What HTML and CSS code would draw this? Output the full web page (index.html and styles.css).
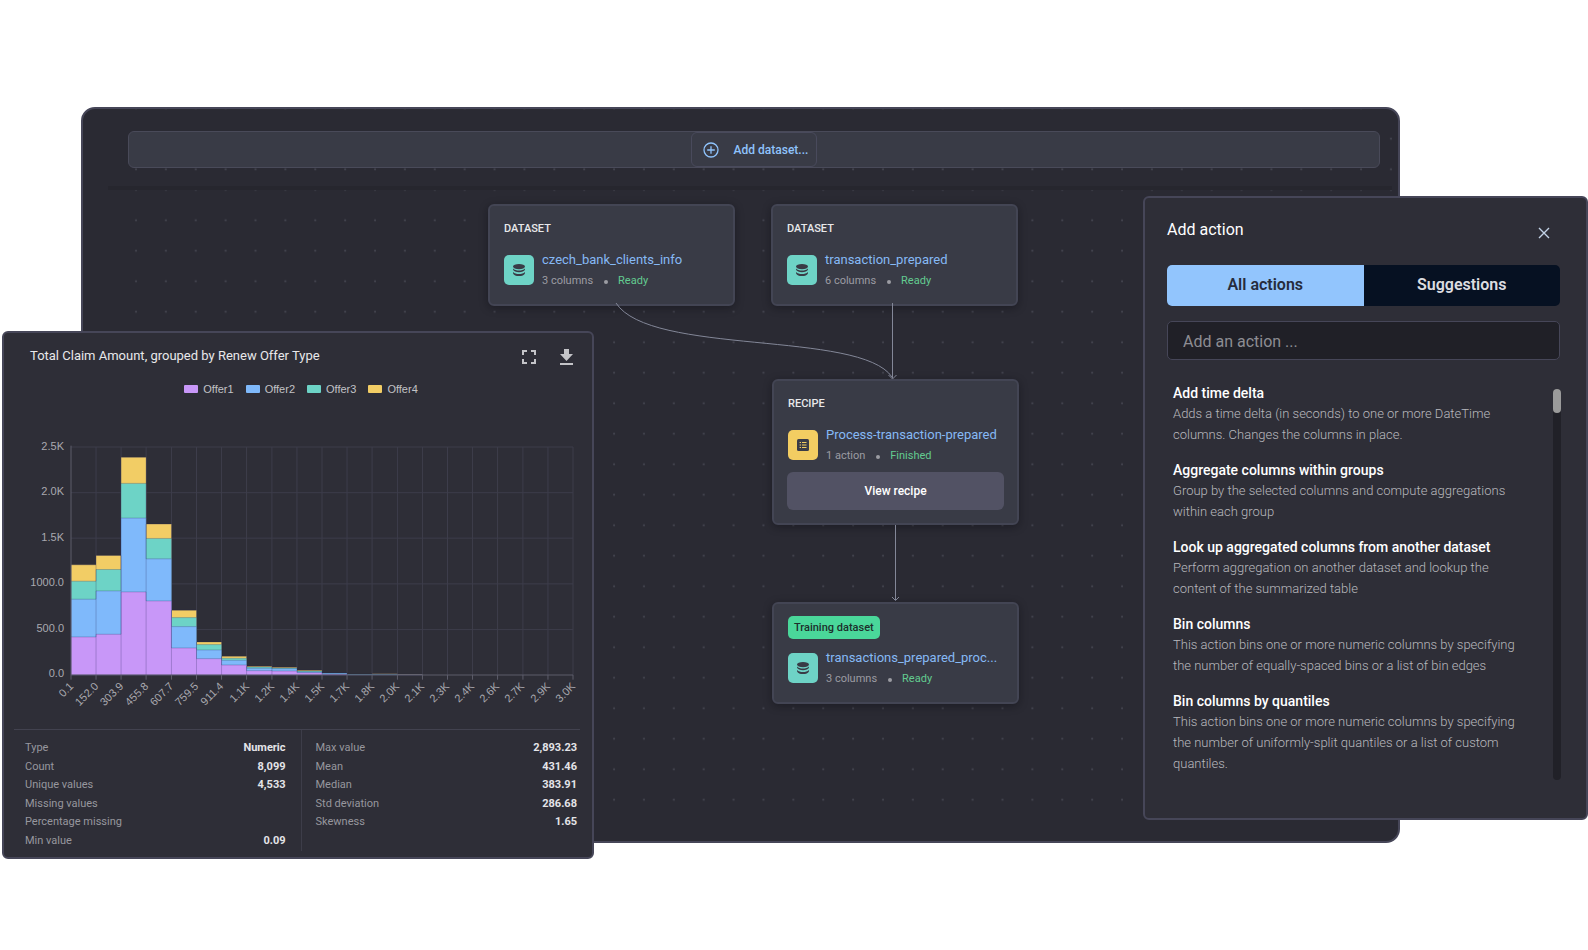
FILE: index.html
```html
<!DOCTYPE html>
<html lang="en">
<head>
<meta charset="utf-8">
<title>Recipe flow</title>
<link rel="stylesheet" href="styles.css">
</head>
<body>
<svg class="defs" aria-hidden="true">
  <defs>
    <symbol id="database" viewBox="0 0 12 12">
      <ellipse cx="6" cy="2.6" rx="6" ry="2.6"/>
      <path d="M0 4.4C1.4 6 3.6 6.4 6 6.4S10.600 6 12 4.400V5.600C11.400 7.500 8.700 8.200 6 8.200S.6 7.500 0 5.600Z"/>
      <path d="M0 8C1.400 9.600 3.600 10 6 10S10.600 9.600 12 8V9.200C11.400 11.200 8.700 12 6 12S.6 11.200 0 9.200Z"/>
    </symbol>
    <pattern id="dots" x="38" y="15" width="29.88" height="30.5" patternUnits="userSpaceOnUse">
      <circle cx="15" cy="15.250" r="1" fill="#474853"/>
    </pattern>
    <pattern id="dots-head" x="38" y="45" width="29.88" height="30.5" patternUnits="userSpaceOnUse">
      <circle cx="15" cy="15.250" r="1" fill="#474853"/>
    </pattern>
  </defs>
</svg>

<div class="stage">
  <main class="board">
    <header class="board-head">
      <svg class="backdrop" aria-hidden="true"><rect x="40" width="1275" height="76" fill="url(#dots-head)"/></svg>
      <div class="toolbar">
        <button class="add-dataset" type="button">
          <svg width="16" height="16" viewBox="0 0 16 16" fill="none" stroke="currentColor" stroke-width="1.300" aria-hidden="true"><circle cx="8" cy="8" r="7"/><path d="M8 4.200V11.800M4.200 8H11.800"/></svg>
          <span>Add dataset...</span>
        </button>
      </div>
    </header>
    <section class="canvas">
      <svg class="backdrop" aria-hidden="true"><rect x="40" width="1275" height="618" fill="url(#dots)"/></svg>

      <article class="node node-clients">
        <h2 class="node-kind">DATASET</h2>
        <div class="node-row">
          <span class="tile tile-data"><svg width="12" height="12"><use href="#database"/></svg></span>
          <div class="node-text">
            <a class="node-name" href="#clients">czech_bank_clients_info</a>
            <p class="node-meta">3 columns<i class="sep"></i><span class="ok">Ready</span></p>
          </div>
        </div>
      </article>

      <article class="node node-transactions">
        <h2 class="node-kind">DATASET</h2>
        <div class="node-row">
          <span class="tile tile-data"><svg width="12" height="12"><use href="#database"/></svg></span>
          <div class="node-text">
            <a class="node-name" href="#transactions">transaction_prepared</a>
            <p class="node-meta">6 columns<i class="sep"></i><span class="ok">Ready</span></p>
          </div>
        </div>
      </article>

      <article class="node node-recipe">
        <h2 class="node-kind">RECIPE</h2>
        <div class="node-row">
          <span class="tile tile-recipe">
            <svg width="12" height="12" viewBox="0 0 12 12"><rect width="12" height="12" rx="1.500" fill="#3a3b47"/><path d="M2.600 3.500H4M2.600 6H4M2.600 8.500H4M5 3.500H9.500M5 6H9.500M5 8.500H9.500" stroke="#f3cd62" stroke-width="1.100"/></svg>
          </span>
          <div class="node-text">
            <a class="node-name" href="#recipe">Process-transaction-prepared</a>
            <p class="node-meta">1 action<i class="sep"></i><span class="ok">Finished</span></p>
          </div>
        </div>
        <button class="view-recipe" type="button">View recipe</button>
      </article>

      <article class="node node-training">
        <span class="badge">Training dataset</span>
        <div class="node-row">
          <span class="tile tile-data"><svg width="12" height="12"><use href="#database"/></svg></span>
          <div class="node-text">
            <a class="node-name" href="#processed">transactions_prepared_proc...</a>
            <p class="node-meta">3 columns<i class="sep"></i><span class="ok">Ready</span></p>
          </div>
        </div>
      </article>

      <svg class="edges" fill="none" stroke="#838798" aria-hidden="true">
        <path d="M533 113C567 166 777 140 809 187"/>
        <path d="M809.500 113V188M805.500 185L809.500 189L813.500 185"/>
        <path d="M812.500 335V410M809 407L812.500 410.500L816 407"/>
      </svg>
    </section>
  </main>

  <section class="panel chart-panel">
    <div class="chart-head">
      <h2 class="chart-title">Total Claim Amount, grouped by Renew Offer Type</h2>
      <div class="chart-tools">
        <button class="icon-button" type="button" aria-label="Full screen">
          <svg width="14" height="14" viewBox="0 0 14 14" fill="none" stroke="currentColor" stroke-width="2"><path d="M1 5V1H5M9 1H13V5M13 9V13H9M5 13H1V9"/></svg>
        </button>
        <button class="icon-button" type="button" aria-label="Download">
          <svg width="14" height="16" viewBox="0 0 14 16" fill="currentColor"><path d="M4 0H9V5H13L6.500 12L0 5H4ZM0 14H13V16H0Z"/></svg>
        </button>
      </div>
    </div>
    <ul class="legend">
      <li><i class="swatch s1"></i>Offer1</li>
      <li><i class="swatch s2"></i>Offer2</li>
      <li><i class="swatch s3"></i>Offer3</li>
      <li><i class="swatch s4"></i>Offer4</li>
    </ul>
    <svg class="chart" viewBox="0 0 588 280" role="img" aria-label="Stacked histogram of total claim amount">
      <svg x="67" y="14" width="502" height="228" viewBox="0 0 1504 683" preserveAspectRatio="none" overflow="visible">
        <path class="grid" d="M0 0H1504M0 137H1504M0 273H1504M0 410H1504M0 547H1504M75 0V683M150 0V683M225 0V683M301 0V683M376 0V683M451 0V683M526 0V683M602 0V683M677 0V683M752 0V683M827 0V683M902 0V683M978 0V683M1053 0V683M1128 0V683M1203 0V683M1278 0V683M1354 0V683M1429 0V683M1504 0V683"/>
        <path class="f4" d="M0 683V353H75V325H150V31H225V231H301V489H376V584H451V627H526V657H602V660H677V669H752V677H827V681H902V679H978V681H1053V683Z"/>
        <path class="f3" d="M0 683V402H75V367H150V109H225V274H301V511H376V592H451V633H526V659H602V662H677V671H752V677H827V681H978V683Z"/>
        <path class="f2" d="M0 683V456H75V431H150V213H225V335H301V538H376V608H451V639H526V663H602V664H677V674H752V678H827V682H1053V683Z"/>
        <path class="f1" d="M0 683V569H75V561H150V434H225V461H301V602H376V634H451V653H526V670H602V671H677V676H752V681H827V683Z"/>
        <path class="seam" d="M75 353V683M150 325V683M225 231V683M301 489V683M376 584V683M451 627V683M526 657V683M602 660V683"/>
        <path class="axis" d="M0 -4V683M0 683H1504M0 683V697M75 683V697M150 683V697M225 683V697M301 683V697M376 683V697M451 683V697M526 683V697M602 683V697M677 683V697M752 683V697M827 683V697M902 683V697M978 683V697M1053 683V697M1128 683V697M1203 683V697M1278 683V697M1354 683V697M1429 683V697M1504 683V697"/>
      </svg>
      <g class="tick" text-anchor="end">
        <text x="60" y="17">2.5K</text>
        <text x="60" y="62">2.0K</text>
        <text x="60" y="108">1.5K</text>
        <text x="60" y="153">1000.0</text>
        <text x="60" y="199">500.0</text>
        <text x="60" y="244">0.0</text>
        <text transform="translate(70 254) rotate(-45)">0.1</text>
        <text transform="translate(95 254) rotate(-45)">152.0</text>
        <text transform="translate(120 254) rotate(-45)">303.9</text>
        <text transform="translate(145 254) rotate(-45)">455.8</text>
        <text transform="translate(170 254) rotate(-45)">607.7</text>
        <text transform="translate(195 254) rotate(-45)">759.5</text>
        <text transform="translate(220 254) rotate(-45)">911.4</text>
        <text transform="translate(246 254) rotate(-45)">1.1K</text>
        <text transform="translate(271 254) rotate(-45)">1.2K</text>
        <text transform="translate(296 254) rotate(-45)">1.4K</text>
        <text transform="translate(321 254) rotate(-45)">1.5K</text>
        <text transform="translate(346 254) rotate(-45)">1.7K</text>
        <text transform="translate(371 254) rotate(-45)">1.8K</text>
        <text transform="translate(396 254) rotate(-45)">2.0K</text>
        <text transform="translate(421 254) rotate(-45)">2.1K</text>
        <text transform="translate(446 254) rotate(-45)">2.3K</text>
        <text transform="translate(471 254) rotate(-45)">2.4K</text>
        <text transform="translate(496 254) rotate(-45)">2.6K</text>
        <text transform="translate(521 254) rotate(-45)">2.7K</text>
        <text transform="translate(547 254) rotate(-45)">2.9K</text>
        <text transform="translate(572 254) rotate(-45)">3.0K</text>
      </g>
    </svg>
    <div class="stats">
      <div class="stats-col">
        <table class="stats-table">
          <tr><th scope="row">Type</th><td>Numeric</td></tr>
          <tr><th scope="row">Count</th><td>8,099</td></tr>
          <tr><th scope="row">Unique values</th><td>4,533</td></tr>
          <tr><th scope="row">Missing values</th><td></td></tr>
          <tr><th scope="row">Percentage missing</th><td></td></tr>
          <tr><th scope="row">Min value</th><td>0.09</td></tr>
        </table>
      </div>
      <div class="stats-col">
        <table class="stats-table">
          <tr><th scope="row">Max value</th><td>2,893.23</td></tr>
          <tr><th scope="row">Mean</th><td>431.46</td></tr>
          <tr><th scope="row">Median</th><td>383.91</td></tr>
          <tr><th scope="row">Std deviation</th><td>286.68</td></tr>
          <tr><th scope="row">Skewness</th><td>1.65</td></tr>
          <tr><td>&nbsp;</td><td></td></tr>
        </table>
      </div>
    </div>
  </section>

  <aside class="panel action-panel">
    <div class="action-head">
      <h2 class="action-title">Add action</h2>
      <button class="icon-button close" type="button" aria-label="Close">
        <svg width="12" height="12" viewBox="0 0 12 12" fill="none" stroke="currentColor" stroke-width="1.400"><path d="M1 1L11 11M11 1L1 11"/></svg>
      </button>
    </div>
    <div class="tabs">
      <button class="tab tab-on" type="button">All actions</button>
      <button class="tab" type="button">Suggestions</button>
    </div>
    <input class="search" type="text" placeholder="Add an action ..." aria-label="Add an action">
    <div class="scroller">
      <ul class="actions">
        <li><h3>Add time delta</h3><p>Adds a time delta (in seconds) to one or more DateTime<br>columns. Changes the columns in place.</p></li>
        <li><h3>Aggregate columns within groups</h3><p>Group by the selected columns and compute aggregations<br>within each group</p></li>
        <li><h3>Look up aggregated columns from another dataset</h3><p>Perform aggregation on another dataset and lookup the<br>content of the summarized table</p></li>
        <li><h3>Bin columns</h3><p>This action bins one or more numeric columns by specifying<br>the number of equally-spaced bins or a list of bin edges</p></li>
        <li><h3>Bin columns by quantiles</h3><p>This action bins one or more numeric columns by specifying<br>the number of uniformly-split quantiles or a list of custom<br>quantiles.</p></li>
      </ul>
      <div class="track"><div class="thumb"></div></div>
    </div>
  </aside>
</div>
</body>
</html>
```
FILE: styles.css
```css
* { box-sizing: border-box; }

body {
  margin: 0;
  background: #fff;
  color: #e8e8ea;
  font-family: Roboto, "Liberation Sans", sans-serif;
  font-size: 14px;
}

h2, h3, p, ul { margin: 0; padding: 0; font-weight: 400; }
ul { list-style: none; }
button, input { margin: 0; font: inherit; color: inherit; }
button { cursor: pointer; }
svg { display: block; }

.defs { position: absolute; width: 0; height: 0; }

/* Three overlapping windows placed on shared grid lines */
.stage {
  display: grid;
  grid-template-columns: minmax(0, 2fr) minmax(0, 79fr) minmax(0, 513fr) minmax(0, 549fr) minmax(0, 257fr) minmax(0, 188fr);
  grid-template-rows: 107px 89px 135px minmax(489px, auto) 23px 16px;
}

.board {
  grid-area: 2 / 3 / 6 / 6;
  display: flex;
  flex-direction: column;
  border: 2px solid #464658;
  border-radius: 14px;
  background: #2a2a33;
  isolation: isolate;
  overflow: hidden;
}

.board-head {
  position: relative;
  padding: 22px 18px 22px 45px;
}

.board-head::after {
  content: "";
  position: absolute;
  inset: auto 6px 0 25px;
  height: 4px;
  background: #26262e;
}

.backdrop, .edges {
  position: absolute;
  inset: 0;
  width: 100%;
  height: 100%;
}

.toolbar {
  position: relative;
  display: flex;
  justify-content: center;
  border: 1px solid #494a59;
  border-radius: 6px;
  background: #393b46;
}

.add-dataset {
  display: flex;
  align-items: center;
  gap: 15px;
  height: 35px;
  padding: 0 8px 0 11px;
  border: 1px solid #494a5c;
  border-radius: 6px;
  background: none;
  color: #8fc3fc;
  font-size: 12px;
  font-weight: 500;
}

.canvas { position: relative; flex: 1; }

.node {
  position: absolute;
  width: 247px;
  padding: 15px 14px 12px;
  border: 2px solid #434554;
  border-radius: 6px;
  background: #393b46;
  box-shadow: 0 2px 8px rgba(10, 10, 16, .4);
}

.node-clients { left: 405px; top: 14px; }
.node-transactions { left: 688px; top: 14px; }
.node-recipe { left: 689px; top: 189px; }
.node-training { left: 689px; top: 412px; padding-top: 12px; }

.node-kind {
  margin-bottom: 11px;
  font-size: 11px;
  font-weight: 500;
  line-height: 16px;
}

.node-row { display: flex; align-items: center; gap: 8px; }

.tile {
  display: grid;
  place-items: center;
  flex: none;
  width: 30px;
  height: 30px;
  border-radius: 5px;
  fill: #393b46;
}

.tile-data { background: #6ed3c6; }
.tile-recipe { background: #f3cd62; }

.node-text { min-width: 0; padding-top: 2px; }

.node-name {
  display: block;
  color: #86b9f5;
  font-size: 13px;
  line-height: 20px;
  text-decoration: none;
  white-space: nowrap;
}

.node-meta {
  display: flex;
  align-items: center;
  color: #9c9ca3;
  font-size: 11px;
  line-height: 22px;
}

.sep {
  width: 4px;
  height: 4px;
  margin: 1px 10px 0 11px;
  border-radius: 50%;
  background: #9c9ca3;
}

.ok { color: #63cb90; }

.view-recipe {
  display: block;
  width: 217px;
  height: 38px;
  margin: 5px 0 1px -1px;
  border: 0;
  border-radius: 6px;
  background: #525264;
  color: #fff;
  font-size: 12px;
  font-weight: 500;
}

.badge {
  display: block;
  width: fit-content;
  margin-bottom: 7px;
  padding: 0 6px;
  border-radius: 5px;
  background: #4ad79a;
  color: #1d2f2c;
  font-size: 11px;
  font-weight: 500;
  line-height: 23px;
}

.panel {
  position: relative;
  z-index: 1;
  border: 2px solid #464658;
  border-radius: 6px;
  background: #2e2e37;
}

/* Chart window */
.chart-panel {
  grid-area: 4 / 2 / 7 / 4;
  display: flex;
  flex-direction: column;
}

.chart-head {
  display: flex;
  justify-content: space-between;
  padding: 15px 18px 0 26px;
}

.chart-title { font-size: 13px; line-height: 16px; }
.chart-tools { display: flex; gap: 24px; color: #c4c4c8; }

.icon-button {
  display: grid;
  place-items: center;
  height: 18px;
  padding: 0;
  border: 0;
  background: none;
}

.legend {
  display: flex;
  justify-content: center;
  gap: 12px;
  margin-top: 17px;
  padding-left: 6px;
  color: #c2c2c6;
  font-family: "Liberation Sans", sans-serif;
  font-size: 11px;
  line-height: 12px;
}

.legend li { display: flex; align-items: center; gap: 5px; }
.swatch { width: 14px; height: 8px; border-radius: 1px; }
.s1 { background: #c897f8; }
.s2 { background: #7fb9fb; }
.s3 { background: #6dd3c6; }
.s4 { background: #f2cd65; }

.chart { width: 100%; margin-top: 38px; }
.chart path { vector-effect: non-scaling-stroke; }
.grid { fill: none; stroke: #3d3d4b; }
.axis { fill: none; stroke: #5d5d6b; }
.seam { fill: none; stroke: rgba(40, 40, 90, .25); }
.f1, .f2, .f3, .f4 { stroke: rgba(40, 40, 90, .25); }
.f1 { fill: #c897f8; }
.f2 { fill: #7fb9fb; }
.f3 { fill: #6dd3c6; }
.f4 { fill: #f2cd65; }
.tick { fill: #a9a9af; font-family: "Liberation Sans", sans-serif; font-size: 11px; }

.stats {
  display: grid;
  grid-template-columns: 287fr 278fr;
  margin: auto 12px 6px 10px;
  border-top: 1px solid #42424f;
}

.stats-col { padding: 9px 3px 0 14px; }
.stats-col:first-child { padding: 9px 15px 1px 11px; border-right: 1px solid #3d3d49; }

.stats-table {
  width: 100%;
  height: 111px;
  border-collapse: collapse;
  font-size: 11px;
  line-height: 16px;
}

.stats-table th { padding: 0; color: #97979e; font-weight: 400; text-align: left; }
.stats-table td { padding: 0; color: #e4e4e8; font-weight: 700; text-align: right; }

/* Action window */
.action-panel {
  grid-area: 3 / 5 / 5 / 7;
  padding: 20px 26px 38px 22px;
}

.action-head {
  display: flex;
  justify-content: space-between;
  padding-right: 10px;
}

.action-title { color: #fff; font-size: 16px; line-height: 24px; }
.close { height: 30px; color: #c2d2e6; }

.tabs {
  display: grid;
  grid-template-columns: 1fr 1fr;
  margin-top: 17px;
  border-radius: 5px;
  background: #061122;
  overflow: hidden;
}

.tab {
  height: 41px;
  padding: 0 0 2px;
  border: 0;
  background: none;
  color: #dcdde0;
  font-size: 16px;
  font-weight: 600;
}

.tab-on { background: #92c5fd; color: #262c3c; }

.search {
  display: block;
  width: 100%;
  height: 39px;
  margin-top: 15px;
  padding: 2px 15px 0;
  border: 1px solid #464658;
  border-radius: 5px;
  background: #202027;
  font-size: 16px;
}

.search::placeholder { color: #8d8d93; opacity: 1; }

.scroller {
  display: flex;
  justify-content: space-between;
  margin: 24px -1px 0 6px;
}

.actions { padding-bottom: 6px; }
.actions li { margin-bottom: 16px; white-space: nowrap; }
.actions li:last-child { margin-bottom: 0; }
.actions h3 { color: #fff; font-size: 14px; font-weight: 500; line-height: 19px; }
.actions p { color: #b9b9be; font-size: 13px; font-weight: 300; line-height: 21px; }

.track {
  width: 8px;
  margin: 5px 0 0;
  border-radius: 4px;
  background: #212128;
}

.thumb { height: 24px; border-radius: 4px; background: #9b9b9b; }
```
